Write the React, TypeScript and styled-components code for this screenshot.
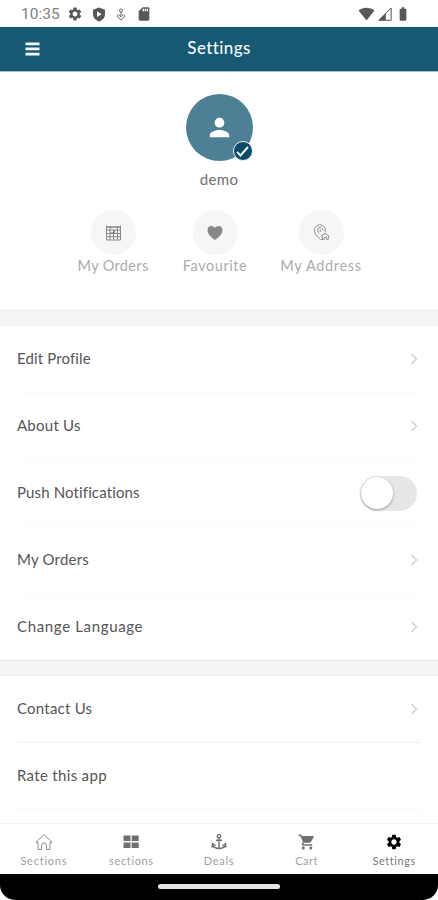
import React from 'react';
import styled, { createGlobalStyle } from 'styled-components';
import {
  MdSettings, MdSdCard, MdPerson, MdShoppingCart, MdBatteryFull,
} from 'react-icons/md';

const Global = createGlobalStyle`
  * { box-sizing: border-box; }
  body { margin: 0; background: #fff; }
`;

const Screen = styled.main`
  width: 438px;
  height: 900px;
  overflow: hidden;
  display: flex;
  flex-direction: column;
  background: #fff;
  color: #555;
  font-family: Lato, sans-serif;
`;

const StatusBar = styled.div`
  height: 27px;
  flex: none;
  display: flex;
  align-items: center;
  justify-content: space-between;
  padding: 1px 27px 0 21px;
  color: #585858;
  svg { display: block; }
`;

const StatusGroup = styled.div<{ $gap: number }>`
  display: flex;
  align-items: center;
  gap: ${p => p.$gap}px;
`;

const Clock = styled.span`
  width: 37px;
  white-space: nowrap;
  font: 15.5px/18px Roboto, sans-serif;
  color: #808080;
`;

const Header = styled.header`
  height: 45px;
  flex: none;
  display: grid;
  grid-template-columns: 64px 1fr 64px;
  align-items: center;
  background: #175872;
  border-bottom: 1px solid #a3bfca;
  color: #f5f8fc;
`;

const MenuButton = styled.button`
  border: 0;
  padding: 0;
  background: none;
  color: inherit;
  display: flex;
  justify-content: center;
`;

const Title = styled.h1`
  margin: 0;
  text-align: center;
  font-size: 17px;
  line-height: 22px;
  font-weight: 500;
  letter-spacing: 0.38px;
  padding-bottom: 2px;
`;

const Profile = styled.section`
  height: 238px;
  flex: none;
  display: flex;
  flex-direction: column;
  align-items: center;
  padding-top: 22px;
`;

const Avatar = styled.div`
  position: relative;
  width: 67px;
  height: 67px;
  border-radius: 50%;
  background: #4d8095;
  color: #fff;
  display: flex;
  align-items: center;
  justify-content: center;
`;

const Verified = styled.span`
  position: absolute;
  right: 0;
  bottom: 0;
  width: 20px;
  height: 20px;
  border: 1.5px solid #e6f2fa;
  border-radius: 50%;
  background: #0d4b68;
  display: flex;
  align-items: center;
  justify-content: center;
`;

const UserName = styled.div`
  margin-top: 8px;
  font-size: 15px;
  line-height: 20px;
  letter-spacing: 0.35px;
  color: #707070;
`;

const Shortcuts = styled.div`
  width: 313px;
  margin-top: 21px;
  display: grid;
  grid-template-columns: 101px 103px 109px;
`;

const Shortcut = styled.div<{ $spacing: number }>`
  display: flex;
  flex-direction: column;
  align-items: center;
  white-space: nowrap;
  font-size: 14.5px;
  line-height: 18px;
  letter-spacing: ${p => p.$spacing}px;
  color: #ababab;
`;

const ShortcutDisc = styled.span`
  width: 45px;
  height: 45px;
  border-radius: 50%;
  margin-bottom: 2px;
  background: #f6f6f6;
  color: #888;
  display: flex;
  align-items: center;
  justify-content: center;
`;

const Divider = styled.div`
  height: 16px;
  flex: none;
  background: #f5f5f5;
  border-top: 1px solid #e8e8e8;
  border-bottom: 1px solid #eee;
`;

const List = styled.ul<{ $height: number }>`
  margin: 0;
  padding: 0 17px;
  list-style: none;
  height: ${p => p.$height}px;
  flex: none;
  overflow: hidden;
`;

const Row = styled.li<{ $line: string }>`
  height: 67px;
  display: flex;
  align-items: center;
  justify-content: space-between;
  border-bottom: 1px solid ${p => p.$line};
`;

const RowLabel = styled.span<{ $spacing: number }>`
  padding-bottom: 2px;
  font-size: 15px;
  line-height: 20px;
  letter-spacing: ${p => p.$spacing}px;
  white-space: nowrap;
`;

const Chevron = styled.svg`
  width: 8px;
  height: 12px;
  margin-right: 3px;
  fill: none;
  stroke: #ccc;
  stroke-width: 1.3;
`;

const Switch = styled.span`
  width: 57px;
  height: 35px;
  margin-right: 4px;
  border-radius: 18px;
  background: #e6e6e6;
  display: flex;
  align-items: center;
  padding-left: 1px;
`;

const Thumb = styled.span`
  width: 32px;
  height: 32px;
  border-radius: 50%;
  background: #fff;
  box-shadow: 0 1px 3px #0005;
`;

const Nav = styled.nav`
  height: 51px;
  flex: none;
  border-top: 1px solid #f1f1f1;
  padding-top: 9px;
  display: grid;
  grid-template-columns: repeat(5, 1fr);
`;

const NavItem = styled.div<{ $active?: boolean; $spacing: number }>`
  display: flex;
  flex-direction: column;
  align-items: center;
  gap: 3px;
  font-size: 11px;
  line-height: 14px;
  letter-spacing: ${p => p.$spacing}px;
  color: ${p => (p.$active ? '#777' : '#a0a0a0')};
  svg { color: ${p => (p.$active ? '#000' : '#707070')}; }
`;

const GestureBar = styled.footer`
  height: 26px;
  flex: none;
  border-radius: 0 0 15px 15px;
  background: #000;
  display: flex;
  justify-content: center;
  padding-top: 10px;
`;

const Handle = styled.span`
  width: 122px;
  height: 5px;
  border-radius: 3px;
  background: #e6e6e6;
`;

const MenuIcon = () => (
  <svg width="15" height="14" viewBox="0 0 15 14" fill="currentColor">
    <path d="M.5.5h14v2.700H.5ZM.5 5.600h14v2.700H.5ZM.5 10.700h14v2.700H.5Z" />
  </svg>
);

const ShieldIcon = () => (
  <svg width="14" height="15" viewBox="0 0 14 15">
    <path d="M7 .5 13 2.8v4.4c0 3.400-2.500 6-6 7.300-3.500-1.300-6-3.900-6-7.300V2.800Z" fill="currentColor" />
    <path d="M5 4.300v5.800l4.700-2.900Z" fill="#fff" />
  </svg>
);

const DownloadIcon = () => (
  <svg width="12" height="13" viewBox="0 0 12 13" fill="none" stroke="currentColor" strokeWidth=".9">
    <circle cx="6" cy="2.500" r="1.500" />
    <path d="M6 4v4.500M4 6.800l2 1.900 2-1.900M3.300 6.300 2 8.200 6 12l4-3.800-1.300-1.900" />
  </svg>
);

const WifiIcon = () => (
  <svg width="17" height="14" viewBox="0 0 17 14">
    <path d="M8.500 13.500.5 3.400C5-.1 12-.1 16.500 3.400Z" fill="currentColor" />
  </svg>
);

const SignalIcon = () => (
  <svg width="14" height="14" viewBox="0 0 14 14">
    <path d="M.8 13.300H13.200V1Z" fill="none" stroke="currentColor" />
    <path d="M.5 13.500 7.800 6v7.500Z" fill="currentColor" />
  </svg>
);

const CheckIcon = () => (
  <svg width="15" height="13" viewBox="0 0 15 13" fill="none" stroke="currentColor" strokeWidth="1.900">
    <path d="m2 6.800 3.500 3.700L13 2" />
  </svg>
);

const OrdersIcon = () => (
  <svg width="17" height="17" viewBox="0 0 17 17" fill="none" stroke="currentColor">
    <path d="M1.500 1.500v14.500h14V1.500M1.500 6h14M1.500 9.500h14M1.500 12.700h14M5 2v13.500M12.500 2v13.500M8.500 6v9.500" />
    <path d="M1 3h15M6 9h4M9 6v3" strokeWidth="1.700" />
  </svg>
);

const HeartIcon = () => (
  <svg width="16" height="16" viewBox="0 0 16 16">
    <path d="M8 15C5.400 12.800.5 9.600.5 5.200.5 2.400 2.100.9 4.300.9 6 .9 7.200 1.800 8 2.700 8.800 1.800 10 .9 11.700.9c2.200 0 3.800 1.500 3.800 4.300C15.500 9.600 10.600 12.800 8 15Z" fill="currentColor" />
  </svg>
);

const AddressIcon = () => (
  <svg width="17" height="17" viewBox="0 0 17 17" fill="none" stroke="currentColor" strokeWidth=".95">
    <path d="M7.200 15.300C4.300 12.800 1.300 9.700 1.300 6.400a5.600 5.600 0 0 1 11.200 0c0 .7-.1 1.300-.3 2" />
    <path d="M7.400 3.300a2.700 2.700 0 0 0-2.800 2.800c0 1.500.8 2.300 1.600 3.300M7.400 3.300a2.700 2.700 0 0 1 2.500 3.500M7.200 5v3" />
    <path d="m7.800 12.300 4.200-3 4.200 3M9.300 11.700v3.600h2v-2h2v2h2v-3.600M7.500 15.500h2" />
  </svg>
);

const HomeIcon = () => (
  <svg width="18" height="18" viewBox="0 0 18 18" fill="none" stroke="currentColor" strokeWidth=".8">
    <path d="m1 9.300 8-7.700 8 7.700-1 .8-1-.8v7.100h-3.500v-4.200A2.500 2.500 0 0 0 9 9.900a2.500 2.500 0 0 0-2.500 2.300v4.200H3V9.300l-1 .8Z" />
  </svg>
);

const GridIcon = () => (
  <svg width="16" height="18" viewBox="0 0 16 18" fill="currentColor">
    <path d="M.5 2.500h7V8h-7ZM8.700 2.500h7V8h-7ZM.5 9.500h7V15h-7ZM8.700 9.500h7V15h-7Z" />
  </svg>
);

const AnchorIcon = () => (
  <svg width="16" height="18" viewBox="0 0 16 18" fill="none" stroke="currentColor" strokeWidth="1.400">
    <circle cx="8" cy="3.300" r="1.700" />
    <path d="M8 5v10.500M5 7.200h6M1.700 12.700c1 1.800 3.300 2.800 6.300 2.800s5.300-1 6.300-2.800M1 14.500l.5-4 3 2.500M15 14.500l-.5-4-3 2.500" />
  </svg>
);

const CartIcon = styled(MdShoppingCart)`
  width: 18px;
  height: 18px;
`;

const Arrow = () => (
  <Chevron viewBox="0 0 8 12"><path d="m1.500 1 5 5-5 5" /></Chevron>
);

const accountRows = [
  { label: 'Edit Profile', spacing: 0.13 },
  { label: 'About Us', spacing: 0.25 },
  { label: 'Push Notifications', spacing: 0.13, toggle: true },
  { label: 'My Orders', spacing: 0.2 },
  { label: 'Change Language', spacing: 0.65 },
];

export default function App() {
  return (
    <>
      <Global />
      <Screen>
        <StatusBar>
          <StatusGroup $gap={9}>
            <Clock>10:35</Clock>
            <MdSettings size={16} />
            <ShieldIcon />
            <DownloadIcon />
            <MdSdCard size={16} />
          </StatusGroup>
          <StatusGroup $gap={3}>
            <WifiIcon />
            <SignalIcon />
            <MdBatteryFull size={16} />
          </StatusGroup>
        </StatusBar>
        <Header>
          <MenuButton aria-label="Menu"><MenuIcon /></MenuButton>
          <Title>Settings</Title>
        </Header>
        <Profile>
          <Avatar>
            <MdPerson size={29} />
            <Verified><CheckIcon /></Verified>
          </Avatar>
          <UserName>demo</UserName>
          <Shortcuts>
            <Shortcut $spacing={0.35}><ShortcutDisc><OrdersIcon /></ShortcutDisc>My Orders</Shortcut>
            <Shortcut $spacing={0.55}><ShortcutDisc><HeartIcon /></ShortcutDisc>Favourite</Shortcut>
            <Shortcut $spacing={0.68}><ShortcutDisc><AddressIcon /></ShortcutDisc>My Address</Shortcut>
          </Shortcuts>
        </Profile>
        <Divider />
        <List $height={334}>
          {accountRows.map(r => (
            <Row key={r.label} $line="#fafafa">
              <RowLabel $spacing={r.spacing}>{r.label}</RowLabel>
              {r.toggle ? <Switch role="switch" aria-checked={false}><Thumb /></Switch> : <Arrow />}
            </Row>
          ))}
        </List>
        <Divider />
        <List $height={147}>
          <Row $line="#f0f0f0"><RowLabel $spacing={0.23}>Contact Us</RowLabel><Arrow /></Row>
          <Row $line="#f7f7f7"><RowLabel $spacing={0.32}>Rate this app</RowLabel></Row>
        </List>
        <Nav>
          <NavItem $spacing={0.75}><HomeIcon />Sections</NavItem>
          <NavItem $spacing={0.65}><GridIcon />sections</NavItem>
          <NavItem $spacing={0.7}><AnchorIcon />Deals</NavItem>
          <NavItem $spacing={0.5}><CartIcon />Cart</NavItem>
          <NavItem $spacing={0.55} $active><MdSettings size={18} />Settings</NavItem>
        </Nav>
        <GestureBar><Handle /></GestureBar>
      </Screen>
    </>
  );
}
